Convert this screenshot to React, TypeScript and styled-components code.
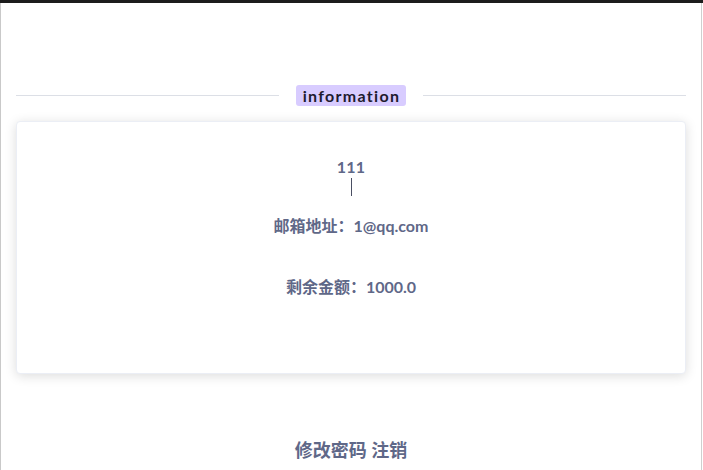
import React from "react";
import styled, { createGlobalStyle } from "styled-components";

const Global = createGlobalStyle`
  html, body { margin: 0; padding: 0; background: #ffffff; }
  body { font-family: Lato, "Noto Sans CJK SC", sans-serif; }
  * { box-sizing: border-box; }
`;

const TopBar = styled.div`
  height: 3px;
  width: 703px;
  background: #1c1c1c;
`;

const Frame = styled.div`
  width: 702px;
  height: 467px;
  border-left: 1px solid #c9c9c9;
  border-right: 1px solid #cfcfcf;
  padding: 82px 15px 0;
  display: flex;
  flex-direction: column;
  overflow: hidden;
`;

const DividerRow = styled.div`
  display: flex;
  align-items: center;
  height: 21px;
  gap: 17px;
`;

const Line = styled.div`
  flex: 1;
  height: 1px;
  background: #dcdfe6;
`;

const Label = styled.span`
  background: #d8ccff;
  border-radius: 3px;
  padding: 0 6px 0 7px;
  height: 21px;
  line-height: 21px;
  font-family: Lato, sans-serif;
  font-weight: 700;
  font-size: 16px;
  letter-spacing: 1.3px;
  color: #1e1b2e;
`;

const Card = styled.div`
  margin-top: 15px;
  height: 253px;
  border: 1px solid #ebeef5;
  border-radius: 4px;
  background: #fff;
  box-shadow: 0 2px 12px 0 rgba(0, 0, 0, 0.14);
  display: flex;
  flex-direction: column;
  align-items: center;
  padding-top: 35px;
`;

const Text = styled.div<{ $gap?: number; $spacing?: number }>`
  margin-top: ${(p) => p.$gap ?? 0}px;
  font-family: Lato, "Noto Sans CJK SC", sans-serif;
  font-weight: 700;
  font-size: 16px;
  letter-spacing: ${(p) => p.$spacing ?? 0}px;
  line-height: 20px;
  color: #5f6888;
  text-align: center;
`;

const VLine = styled.div`
  width: 1px;
  height: 18px;
  background: #4a4f63;
  margin-top: 1px;
`;

const Footer = styled.div`
  margin-top: 64px;
  text-align: center;
  font-family: Lato, "Noto Sans CJK SC", sans-serif;
  font-weight: 700;
  font-size: 18px;
  line-height: 24px;
  color: #5f6888;
`;

export default function App() {
  return (
    <>
      <Global />
      <TopBar />
      <Frame>
        <DividerRow>
          <Line />
          <Label>information</Label>
          <Line />
        </DividerRow>
        <Card>
          <Text $spacing={0.3}>111</Text>
          <VLine />
          <Text $gap={20}>邮箱地址：1@qq.com</Text>
          <Text $gap={41}>剩余金额：1000.0</Text>
        </Card>
        <Footer>修改密码 注销</Footer>
      </Frame>
    </>
  );
}
